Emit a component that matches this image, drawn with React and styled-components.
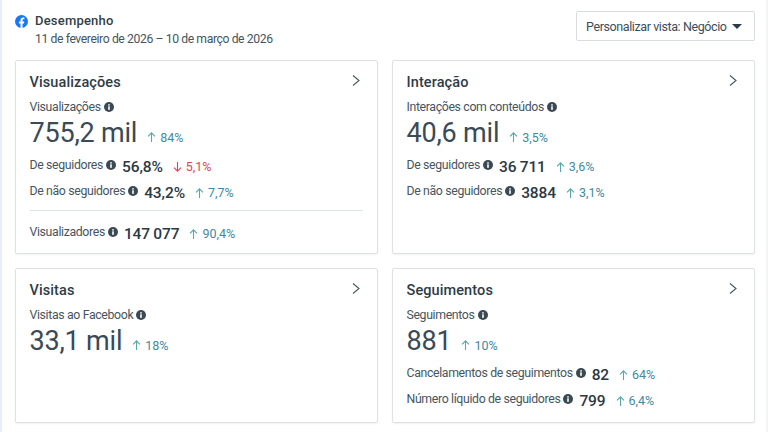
import React from "react";
import styled, { createGlobalStyle } from "styled-components";

const GlobalStyle = createGlobalStyle`
  html, body { margin: 0; padding: 0; background: #fff; }
  body { font-family: Roboto, "Noto Sans", "Liberation Sans", sans-serif; color: #1c2b33; }
  #root { width: 768px; height: 432px; overflow: hidden; }
`;

const Page = styled.div`
  width: 768px;
  height: 432px;
  box-sizing: border-box;
  padding: 10px 11px 0 13px;
  border-left: 2px solid #e4effb;
  border-right: 2px solid #f2f3f5;
  background: #fff;
`;

const Header = styled.header`
  display: flex;
  justify-content: space-between;
  align-items: flex-start;
  height: 50px;
`;

const HeaderTitle = styled.div`
  display: flex;
  gap: 7px;
`;

const Heading = styled.div`
  font-size: 13px;
  font-weight: 500;
  letter-spacing: 0.2px;
  line-height: 21px;
  color: #323f49;
`;

const DateRange = styled.div`
  font-size: 12.2px;
  letter-spacing: -0.4px;
  line-height: 16px;
  color: #46555e;
`;

const ViewSelect = styled.button`
  display: flex;
  align-items: center;
  justify-content: space-between;
  width: 179px;
  height: 30px;
  margin-top: 1px;
  padding: 0 9px;
  box-sizing: border-box;
  background: #fff;
  border: 1px solid #d9dcdf;
  border-radius: 2px;
  font: inherit;
  font-size: 12.5px;
  letter-spacing: -0.4px;
  white-space: nowrap;
  color: #3e4d57;
`;

const Caret = styled.span`
  width: 0;
  height: 0;
  border-left: 5px solid transparent;
  border-right: 5px solid transparent;
  border-top: 5px solid #2c3a44;
  margin-right: 3px;
`;

const Grid = styled.main`
  display: grid;
  grid-template-columns: 363px 363px;
  grid-template-rows: 194px 155px;
  column-gap: 14px;
  row-gap: 14px;
`;

const Card = styled.section`
  box-sizing: border-box;
  padding: 12px 14px 0 13.5px;
  border: 1px solid #dfe2e4;
  border-radius: 2px;
  box-shadow: 0 1px 2px rgba(0, 0, 0, 0.06);
  background: #fff;
`;

const CardHead = styled.div`
  display: flex;
  justify-content: space-between;
  align-items: flex-start;
  height: 20px;
`;

const CardTitle = styled.h2`
  margin: 0;
  font-size: 14.5px;
  font-weight: 500;
  letter-spacing: 0.1px;
  line-height: 19px;
  color: #2e3c47;
`;

const Label = styled.span`
  display: inline-flex;
  align-items: center;
  gap: 3px;
  font-size: 12.3px;
  letter-spacing: -0.35px;
  line-height: 16px;
  white-space: nowrap;
  color: #46555e;
`;

const SubLabel = styled.div`
  margin-top: 6px;
  height: 16px;
  display: flex;
`;

const BigRow = styled.div`
  display: flex;
  align-items: baseline;
  gap: 7px;
  height: 37px;
`;

const BigNumber = styled.span`
  font-size: 27px;
  letter-spacing: -0.2px;
  line-height: 36px;
  font-weight: 400;
  color: #3a4a57;
`;

const Row = styled.div`
  display: flex;
  align-items: center;
  gap: 6px;
  height: 26px;
`;

const Value = styled.span`
  padding-top: 3px;
  font-size: 15.5px;
  font-weight: 500;
  letter-spacing: -0.1px;
  word-spacing: -0.5px;
  color: #2b3943;
`;

const Delta = styled.span`
  display: inline-flex;
  align-items: center;
  gap: 4px;
  margin-left: 3px;
  font-size: 12.5px;
  color: ${(p) => (p.$down ? "#e5404f" : "#3f8aa0")};
`;

const RowDelta = styled(Delta)`
  margin-left: 4px;
  padding-top: 3px;
`;

const Divider = styled.hr`
  margin: 6px 0 8px;
  border: 0;
  border-top: 1px solid #dfe2e4;
`;

const FacebookIcon = () => (
  <svg width="13" height="13" viewBox="0 0 24 24" style={{ marginTop: 5 }}>
    <circle cx="12" cy="12" r="12" fill="#1877f2" />
    <path
      fill="#fff"
      d="M16.7 15.5l.5-3.5h-3.3V9.8c0-1 .5-1.9 2-1.9h1.5v-3s-1.4-.2-2.7-.2c-2.7 0-4.5 1.6-4.5 4.6V12h-3v3.5h3V24h3.7v-8.5z"
    />
  </svg>
);

const InfoIcon = () => (
  <svg width="10" height="10" viewBox="0 0 10 10">
    <circle cx="5" cy="5" r="5" fill="#3b4953" />
    <rect x="4.2" y="4.3" width="1.6" height="3.5" fill="#fff" />
    <rect x="4.2" y="2.2" width="1.6" height="1.4" fill="#fff" />
  </svg>
);

const Chevron = () => (
  <svg width="10" height="13" viewBox="0 0 10 13" style={{ marginTop: 1, marginRight: 2 }}>
    <path d="M2 1.5l6 5-6 5" fill="none" stroke="#46555e" strokeWidth="1.1" />
  </svg>
);

const Arrow = ({ down }) => (
  <svg width="9" height="10" viewBox="0 0 9 10">
    <path
      d={down ? "M4.5 0v9.2M1 5.7l3.5 3.5L8 5.7" : "M4.5 10V.8M1 4.3L4.5.8 8 4.3"}
      fill="none"
      stroke={down ? "#e5404f" : "#55a9a8"}
      strokeWidth="1.1"
    />
  </svg>
);

const Stat = ({ label, value, change, down }) => (
  <Row>
    <Label>
      {label}
      <InfoIcon />
    </Label>
    <Value>{value}</Value>
    <RowDelta $down={down}>
      <Arrow down={down} />
      {change}
    </RowDelta>
  </Row>
);

const MetricCard = ({ title, label, big, change, children }) => (
  <Card>
    <CardHead>
      <CardTitle>{title}</CardTitle>
      <Chevron />
    </CardHead>
    <SubLabel>
      <Label>
        {label}
        <InfoIcon />
      </Label>
    </SubLabel>
    <BigRow>
      <BigNumber>{big}</BigNumber>
      <Delta>
        <Arrow />
        {change}
      </Delta>
    </BigRow>
    {children}
  </Card>
);

export default function App() {
  return (
    <Page>
      <GlobalStyle />
      <Header>
        <HeaderTitle>
          <FacebookIcon />
          <div>
            <Heading>Desempenho</Heading>
            <DateRange>11 de fevereiro de 2026 – 10 de março de 2026</DateRange>
          </div>
        </HeaderTitle>
        <ViewSelect>
          Personalizar vista: Negócio
          <Caret />
        </ViewSelect>
      </Header>
      <Grid>
        <MetricCard title="Visualizações" label="Visualizações" big="755,2 mil" change="84%">
          <Stat label="De seguidores" value="56,8%" change="5,1%" down />
          <Stat label="De não seguidores" value="43,2%" change="7,7%" />
          <Divider />
          <Stat label="Visualizadores" value="147 077" change="90,4%" />
        </MetricCard>
        <MetricCard title="Interação" label="Interações com conteúdos" big="40,6 mil" change="3,5%">
          <Stat label="De seguidores" value="36 711" change="3,6%" />
          <Stat label="De não seguidores" value="3884" change="3,1%" />
        </MetricCard>
        <MetricCard title="Visitas" label="Visitas ao Facebook" big="33,1 mil" change="18%" />
        <MetricCard title="Seguimentos" label="Seguimentos" big="881" change="10%">
          <Stat label="Cancelamentos de seguimentos" value="82" change="64%" />
          <Stat label="Número líquido de seguidores" value="799" change="6,4%" />
        </MetricCard>
      </Grid>
    </Page>
  );
}
